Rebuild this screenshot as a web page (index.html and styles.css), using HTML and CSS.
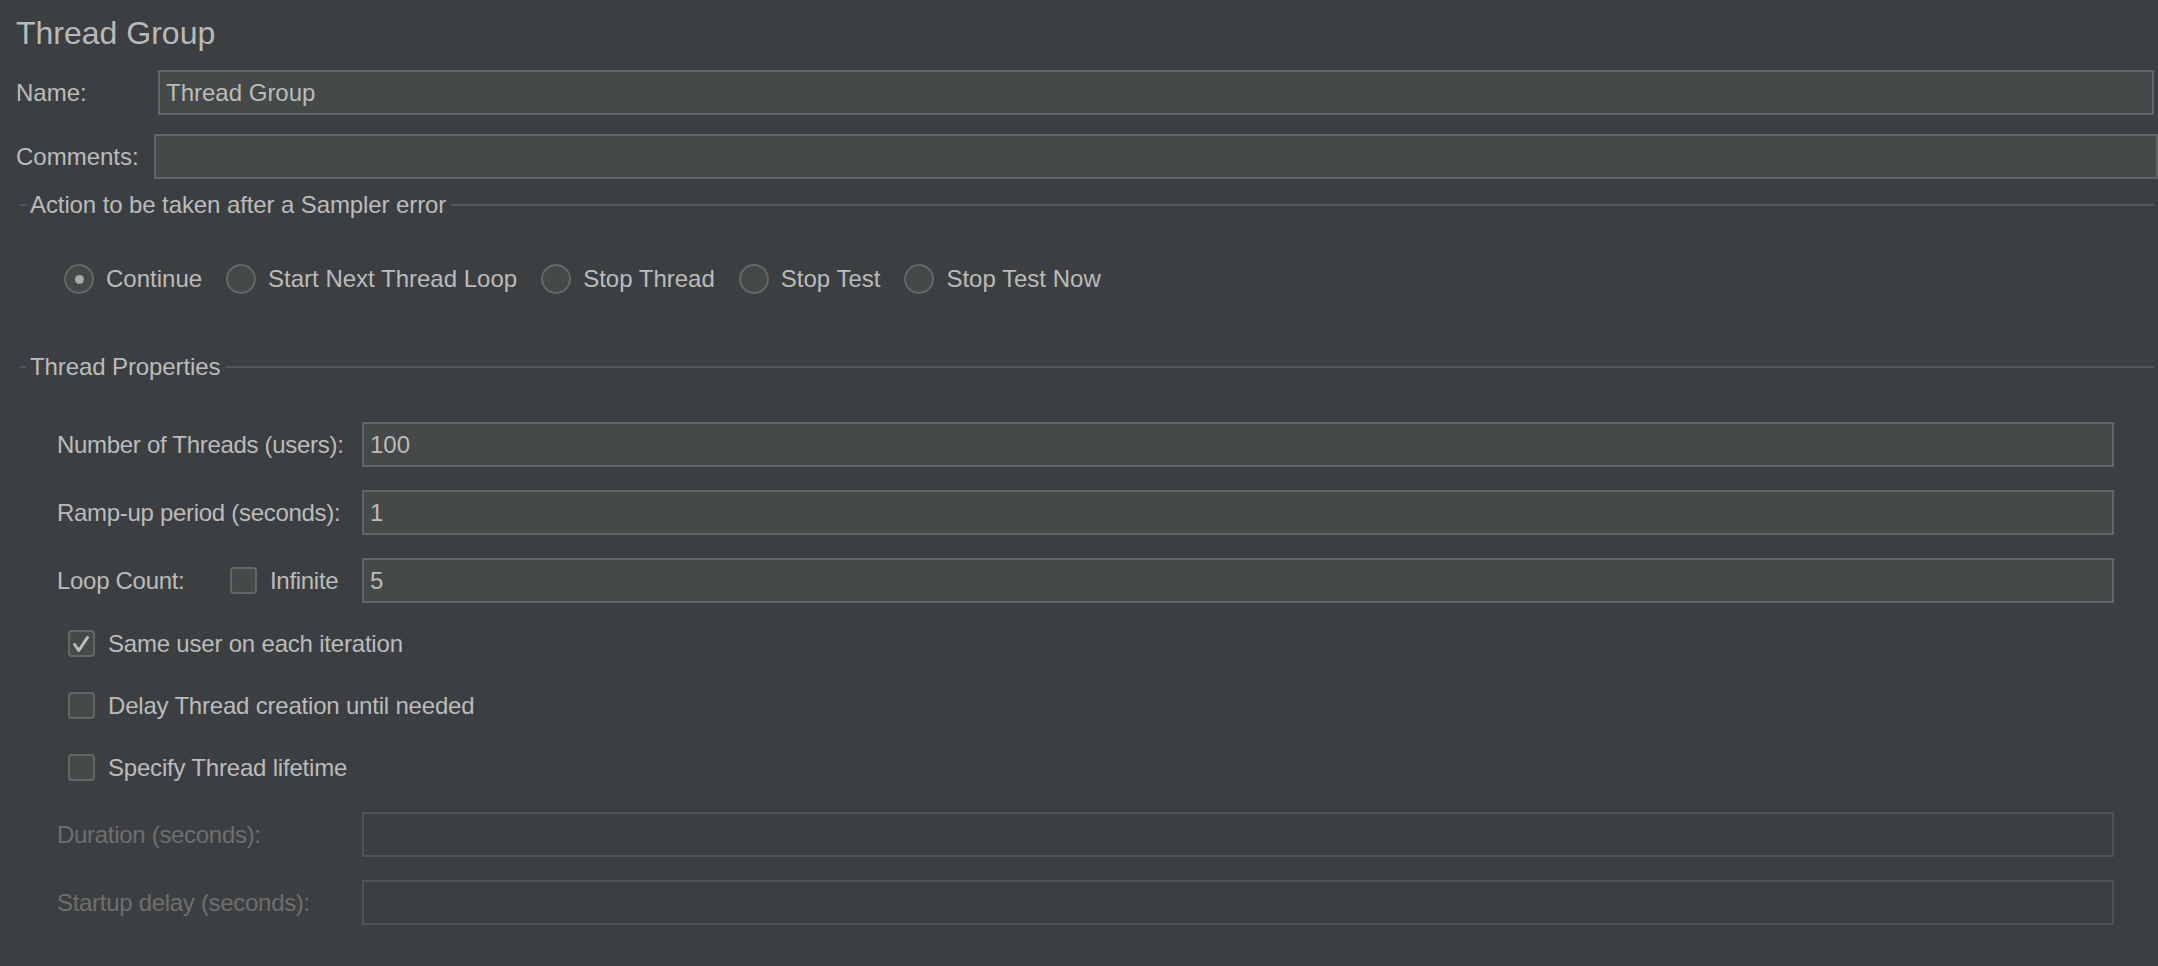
FILE: index.html
```html
<!DOCTYPE html>
<html>
<head>
<meta charset="utf-8">
<title>Thread Group</title>
<link rel="stylesheet" href="styles.css">
</head>
<body>
<div class="panel">
  <h1 class="title">Thread Group</h1>

  <div class="row row-name">
    <label class="lbl lbl-name">Name:</label>
    <input class="field field-name" type="text" value="Thread Group">
  </div>
  <div class="row row-comments">
    <label class="lbl lbl-comments">Comments:</label>
    <input class="field field-comments" type="text" value="">
  </div>

  <div class="group-head group-action">
    <span class="gline gline-start"></span>
    <span class="gtitle">Action to be taken after a Sampler error</span>
    <span class="gline gline-rest"></span>
  </div>

  <div class="radios">
    <span class="radio checked"><span class="dot"></span></span><span class="rlabel">Continue</span>
    <span class="radio"></span><span class="rlabel">Start Next Thread Loop</span>
    <span class="radio"></span><span class="rlabel">Stop Thread</span>
    <span class="radio"></span><span class="rlabel">Stop Test</span>
    <span class="radio"></span><span class="rlabel">Stop Test Now</span>
  </div>

  <div class="group-head group-props">
    <span class="gline gline-start"></span>
    <span class="gtitle">Thread Properties</span>
    <span class="gline gline-rest"></span>
  </div>

  <div class="props">
    <div class="prow first">
      <span class="plabel">Number of Threads (users):</span>
      <input class="field pfield" type="text" value="100">
    </div>
    <div class="prow">
      <span class="plabel">Ramp-up period (seconds):</span>
      <input class="field pfield" type="text" value="1">
    </div>
    <div class="prow">
      <span class="plabel loop">
        <span class="loop-text">Loop Count:</span>
        <span class="check"></span>
        <span class="inf">Infinite</span>
      </span>
      <input class="field pfield" type="text" value="5">
    </div>

    <div class="crow first">
      <span class="check"><svg class="tick" viewBox="0 0 27 27"><path d="M6.5 14.5 L10.8 20.5 L19.5 7.5" /></svg></span>
      <span class="clabel">Same user on each iteration</span>
    </div>
    <div class="crow">
      <span class="check"></span>
      <span class="clabel">Delay Thread creation until needed</span>
    </div>
    <div class="crow">
      <span class="check"></span>
      <span class="clabel">Specify Thread lifetime</span>
    </div>

    <div class="prow disabled first-dis">
      <span class="plabel">Duration (seconds):</span>
      <input class="field pfield" type="text" value="" disabled>
    </div>
    <div class="prow disabled">
      <span class="plabel">Startup delay (seconds):</span>
      <input class="field pfield" type="text" value="" disabled>
    </div>
  </div>
</div>
</body>
</html>
```

FILE: styles.css
```css
html, body {
  margin: 0;
  padding: 0;
}
body {
  background: #3c3f41;
  color: #bbbbbb;
  font-family: "Liberation Sans", Arial, sans-serif;
  font-size: 24px;
  width: 2158px;
  height: 966px;
  overflow: hidden;
}
.panel {
  padding: 13px 0 0 16px;
  box-sizing: border-box;
  height: 966px;
}
.title {
  margin: 0;
  font-size: 32px;
  font-weight: normal;
  line-height: 40px;
  color: #b9b9b9;
}
.row {
  display: flex;
  align-items: center;
  height: 45px;
}
.row-name {
  margin-top: 17px;
}
.row-comments {
  margin-top: 19px;
}
.lbl {
  flex: none;
}
.lbl-name {
  width: 142px;
}
.lbl-comments {
  width: 138px;
}
.field {
  box-sizing: border-box;
  height: 45px;
  border: 2px solid #646464;
  background: #45494a;
  color: #bbbbbb;
  font: inherit;
  padding: 0 6px;
  margin: 0;
  outline: none;
  min-width: 0;
}
.field-name {
  flex: 1;
  margin-right: 4px;
}
.field-comments {
  flex: 1;
}

/* titled borders */
.group-head {
  display: flex;
  align-items: center;
  height: 28px;
  margin-left: 4px;
  margin-right: 4px;
}
.group-action {
  margin-top: 12px;
}
.group-props {
  margin-top: 59px;
}
.gline {
  height: 2px;
  background: #545658;
}
.gline-start {
  width: 6px;
  flex: none;
}
.gline-rest {
  flex: 1;
}
.gtitle {
  padding: 0 5px 0 4px;
  white-space: nowrap;
  letter-spacing: -0.1px;
}

/* radio row */
.radios {
  display: flex;
  align-items: center;
  height: 30px;
  margin-top: 45px;
  padding-left: 48px;
}
.radio {
  box-sizing: border-box;
  width: 30px;
  height: 30px;
  border: 2px solid #666666;
  border-radius: 50%;
  background: #45494a;
  margin-right: 12px;
  display: flex;
  align-items: center;
  justify-content: center;
  flex: none;
}
.dot {
  width: 9px;
  height: 9px;
  border-radius: 50%;
  background: #a9a9a9;
}
.rlabel {
  margin-right: 24px;
  white-space: nowrap;
}

/* properties */
.props {
  padding-left: 41px;
}
.prow {
  display: flex;
  align-items: center;
  height: 45px;
  margin-top: 23px;
}
.prow.first {
  margin-top: 41px;
}
.plabel {
  width: 305px;
  flex: none;
  white-space: nowrap;
  letter-spacing: -0.3px;
}
.pfield {
  flex: 1;
  margin-right: 44px;
}
.loop {
  display: flex;
  align-items: center;
}
.loop-text {
  width: 173px;
}
.loop .check {
  margin-right: 13px;
}

.check {
  box-sizing: border-box;
  width: 27px;
  height: 27px;
  border: 2px solid #666666;
  border-radius: 4px;
  background: #45494a;
  flex: none;
  position: relative;
}
.tick {
  position: absolute;
  left: -2px;
  top: -2px;
  width: 27px;
  height: 27px;
}
.tick path {
  fill: none;
  stroke: #bdbdbd;
  stroke-width: 3;
  stroke-linecap: round;
  stroke-linejoin: round;
}

.crow {
  display: flex;
  align-items: center;
  height: 27px;
  margin-top: 35px;
  padding-left: 11px;
}
.crow.first {
  margin-top: 27px;
}
.crow .check {
  margin-right: 13px;
}
.clabel {
  white-space: nowrap;
  letter-spacing: -0.2px;
}

.prow.first-dis {
  margin-top: 31px;
}
.disabled .plabel {
  color: #6e6e6e;
}
.disabled .field {
  background: #3c3f41;
  border-color: #505254;
}
```
